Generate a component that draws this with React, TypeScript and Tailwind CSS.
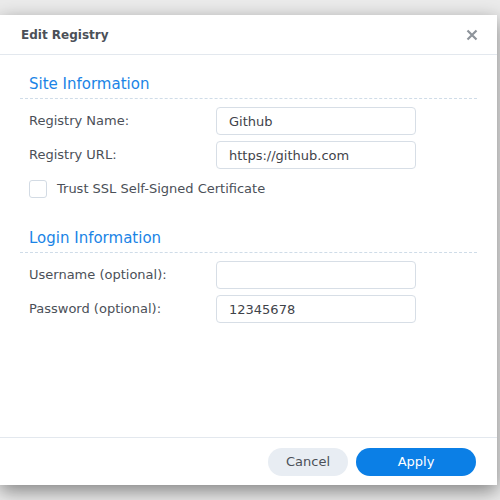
import React, { useState } from 'react'

type FieldProps = {
  label: string
  value: string
  onChange: (v: string) => void
  type?: string
}

function Field({ label, value, onChange, type = 'text' }: FieldProps) {
  return (
    <div className="flex items-center h-[28px] pl-[9px]">
      <label className="w-[187px] text-[13px] text-[#4b5058]">{label}</label>
      <input
        type={type}
        value={value}
        onChange={(e) => onChange(e.target.value)}
        className="w-[200px] h-[28px] rounded-[4px] border border-[#d7dee6] bg-white pl-[12px] text-[13px] text-[#3f434a] outline-none"
      />
    </div>
  )
}

function SectionTitle({ children }: { children: React.ReactNode }) {
  return (
    <div className="pl-[9px] pb-[3px] border-b border-dashed border-[#cfdce8]">
      <h2 className="h-[23px] leading-[24px] text-[15px] text-[#1a84e6]">{children}</h2>
    </div>
  )
}

export default function App() {
  const [name, setName] = useState('Github')
  const [url, setUrl] = useState('https://github.com')
  const [trustSsl, setTrustSsl] = useState(false)
  const [username, setUsername] = useState('')
  const [password, setPassword] = useState('12345678')

  return (
    <div
      className="w-[500px] h-[500px] overflow-hidden bg-[#ebebeb] pt-[15px]"
      style={{ fontFamily: '"DejaVu Sans", Verdana, sans-serif' }}
    >
      <div className="w-[497px] h-[470px] flex flex-col bg-white shadow-[0_6px_18px_rgba(0,0,0,0.45)]">
        {/* Header */}
        <div className="h-[40px] flex items-center justify-between pl-[21px] pr-[19px] pt-[1px] border-b border-[#e3e8ee]">
          <span className="text-[12px] font-bold text-[#4b5058]">Edit Registry</span>
          <button className="w-[13px] h-[13px] flex items-center justify-center">
            <svg width="12" height="12" viewBox="0 0 12 12">
              <path d="M1.5 1.5 L10.5 10.5 M10.5 1.5 L1.5 10.5" stroke="#8e949b" strokeWidth="2.2" />
            </svg>
          </button>
        </div>

        {/* Body */}
        <div className="flex-1 mx-[20px] pt-[17px]">
          <SectionTitle>Site Information</SectionTitle>
          <div className="mt-[8px] flex flex-col gap-[6px]">
            <Field label="Registry Name:" value={name} onChange={setName} />
            <Field label="Registry URL:" value={url} onChange={setUrl} />
          </div>
          <label className="mt-[6px] flex items-center h-[28px] pl-[9px] cursor-pointer">
            <span
              onClick={() => setTrustSsl(!trustSsl)}
              className="w-[18px] h-[18px] rounded-[3px] border border-[#d3dbe4] bg-white"
            />
            <span className="ml-[10px] text-[13px] text-[#4b5058]">Trust SSL Self-Signed Certificate</span>
          </label>

          <div className="mt-[23px]">
            <SectionTitle>Login Information</SectionTitle>
          </div>
          <div className="mt-[8px] flex flex-col gap-[6px]">
            <Field label="Username (optional):" value={username} onChange={setUsername} />
            <Field label="Password (optional):" value={password} onChange={setPassword} />
          </div>
        </div>

        {/* Footer */}
        <div className="h-[48px] border-t border-[#e3e8ee] flex items-start justify-end gap-[8px] pt-[10px] pr-[21px]">
          <button className="w-[80px] h-[28px] rounded-full bg-[#e8edf3] text-[13px] text-[#4b5058]">Cancel</button>
          <button className="w-[120px] h-[28px] rounded-full bg-[#0b7fe6] text-[13px] text-white">Apply</button>
        </div>
      </div>
    </div>
  )
}
